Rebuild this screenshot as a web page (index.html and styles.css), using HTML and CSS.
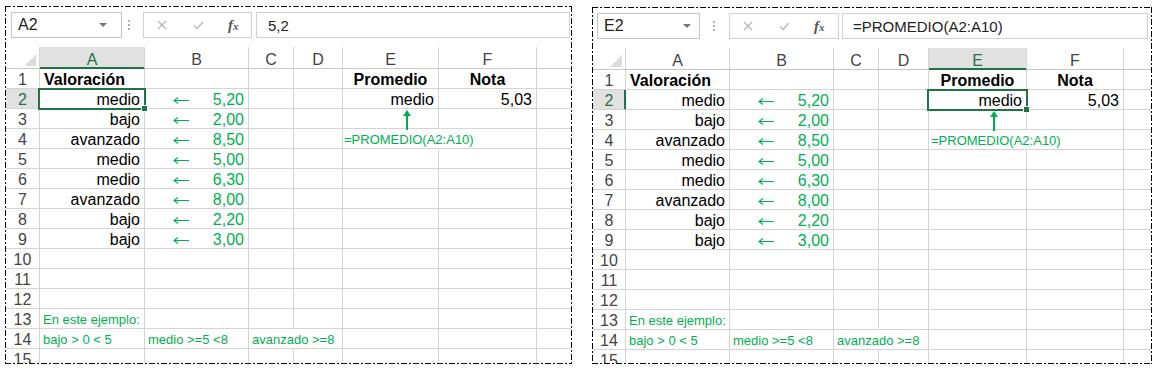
FILE: index.html
```html
<!DOCTYPE html>
<html lang="es">
<head>
    <meta charset="UTF-8">
    <title>PROMEDIO - Valoración</title>
    <link rel="stylesheet" href="styles.css">
</head>
<body>
<div class="page">

    <!-- left sheet: A2 selected -->
    <section class="panel panel-left">
        <div class="panel-body">
            <div class="formula-bar">
                <div class="name-box"><span>A2</span><span class="caret"></span></div>
                <div class="bar-dots"></div>
                <div class="fx-box">
                    <svg class="icon-cancel" width="10" height="10" viewBox="0 0 10 10"><path d="M1 1L9 9M9 1L1 9"/></svg>
                    <svg class="icon-enter" width="11" height="9" viewBox="0 0 11 9"><path d="M1 4.5L4 7.5L10 1"/></svg>
                    <span class="fx">f<span>x</span></span>
                </div>
                <div class="formula-input">5,2</div>
            </div>

            <div class="sheet sheet-left">
                <div class="ch corner"></div><div class="ch on">A</div><div class="ch">B</div><div class="ch">C</div><div class="ch">D</div><div class="ch">E</div><div class="ch">F</div><div class="ch"></div>
                <div class="rh">1</div><div class="b">Valoración</div><div></div><div></div><div></div><div class="b mid">Promedio</div><div class="b mid">Nota</div><div></div>
                <div class="rh on">2</div><div class="r sel">medio</div><div class="val"><svg class="left-arrow" width="16" height="7" viewBox="0 0 16 7"><path d="M1 3.5H16M5 0.5L1 3.5L5 6.5"/></svg>5,20</div><div></div><div></div><div class="r">medio</div><div class="r">5,03</div><div></div>
                <div class="rh">3</div><div class="r">bajo</div><div class="val"><svg class="left-arrow" width="16" height="7" viewBox="0 0 16 7"><path d="M1 3.5H16M5 0.5L1 3.5L5 6.5"/></svg>2,00</div><div></div><div></div><div><svg class="up-arrow" width="8" height="20" viewBox="0 0 8 20"><path d="M4 0L8 6H5V20H3V6H0Z"/></svg></div><div></div><div></div>
                <div class="rh">4</div><div class="r">avanzado</div><div class="val"><svg class="left-arrow" width="16" height="7" viewBox="0 0 16 7"><path d="M1 3.5H16M5 0.5L1 3.5L5 6.5"/></svg>8,50</div><div></div><div></div><div class="note formula spill">=PROMEDIO(A2:A10)</div><div></div><div></div>
                <div class="rh">5</div><div class="r">medio</div><div class="val"><svg class="left-arrow" width="16" height="7" viewBox="0 0 16 7"><path d="M1 3.5H16M5 0.5L1 3.5L5 6.5"/></svg>5,00</div><div></div><div></div><div></div><div></div><div></div>
                <div class="rh">6</div><div class="r">medio</div><div class="val"><svg class="left-arrow" width="16" height="7" viewBox="0 0 16 7"><path d="M1 3.5H16M5 0.5L1 3.5L5 6.5"/></svg>6,30</div><div></div><div></div><div></div><div></div><div></div>
                <div class="rh">7</div><div class="r">avanzado</div><div class="val"><svg class="left-arrow" width="16" height="7" viewBox="0 0 16 7"><path d="M1 3.5H16M5 0.5L1 3.5L5 6.5"/></svg>8,00</div><div></div><div></div><div></div><div></div><div></div>
                <div class="rh">8</div><div class="r">bajo</div><div class="val"><svg class="left-arrow" width="16" height="7" viewBox="0 0 16 7"><path d="M1 3.5H16M5 0.5L1 3.5L5 6.5"/></svg>2,20</div><div></div><div></div><div></div><div></div><div></div>
                <div class="rh">9</div><div class="r">bajo</div><div class="val"><svg class="left-arrow" width="16" height="7" viewBox="0 0 16 7"><path d="M1 3.5H16M5 0.5L1 3.5L5 6.5"/></svg>3,00</div><div></div><div></div><div></div><div></div><div></div>
                <div class="rh">10</div><div></div><div></div><div></div><div></div><div></div><div></div><div></div>
                <div class="rh">11</div><div></div><div></div><div></div><div></div><div></div><div></div><div></div>
                <div class="rh">12</div><div></div><div></div><div></div><div></div><div></div><div></div><div></div>
                <div class="rh">13</div><div class="note">En este ejemplo:</div><div></div><div></div><div></div><div></div><div></div><div></div>
                <div class="rh">14</div><div class="note">bajo &gt; 0 &lt; 5</div><div class="note">medio &gt;=5 &lt;8</div><div class="note spill">avanzado &gt;=8</div><div></div><div></div><div></div><div></div>
                <div class="rh">15</div><div></div><div></div><div></div><div></div><div></div><div></div><div></div>
            </div>
        </div>
    </section>

    <!-- right sheet: E2 selected -->
    <section class="panel panel-right">
        <div class="panel-body">
            <div class="formula-bar">
                <div class="name-box"><span>E2</span><span class="caret"></span></div>
                <div class="bar-dots"></div>
                <div class="fx-box">
                    <svg class="icon-cancel" width="10" height="10" viewBox="0 0 10 10"><path d="M1 1L9 9M9 1L1 9"/></svg>
                    <svg class="icon-enter" width="11" height="9" viewBox="0 0 11 9"><path d="M1 4.5L4 7.5L10 1"/></svg>
                    <span class="fx">f<span>x</span></span>
                </div>
                <div class="formula-input">=PROMEDIO(A2:A10)</div>
            </div>

            <div class="sheet sheet-right">
                <div class="ch corner"></div><div class="ch">A</div><div class="ch">B</div><div class="ch">C</div><div class="ch">D</div><div class="ch on">E</div><div class="ch">F</div><div class="ch"></div>
                <div class="rh">1</div><div class="b">Valoración</div><div></div><div></div><div></div><div class="b mid">Promedio</div><div class="b mid">Nota</div><div></div>
                <div class="rh on">2</div><div class="r">medio</div><div class="val"><svg class="left-arrow" width="16" height="7" viewBox="0 0 16 7"><path d="M1 3.5H16M5 0.5L1 3.5L5 6.5"/></svg>5,20</div><div></div><div></div><div class="r sel">medio</div><div class="r">5,03</div><div></div>
                <div class="rh">3</div><div class="r">bajo</div><div class="val"><svg class="left-arrow" width="16" height="7" viewBox="0 0 16 7"><path d="M1 3.5H16M5 0.5L1 3.5L5 6.5"/></svg>2,00</div><div></div><div></div><div><svg class="up-arrow" width="8" height="20" viewBox="0 0 8 20"><path d="M4 0L8 6H5V20H3V6H0Z"/></svg></div><div></div><div></div>
                <div class="rh">4</div><div class="r">avanzado</div><div class="val"><svg class="left-arrow" width="16" height="7" viewBox="0 0 16 7"><path d="M1 3.5H16M5 0.5L1 3.5L5 6.5"/></svg>8,50</div><div></div><div></div><div class="note formula spill">=PROMEDIO(A2:A10)</div><div></div><div></div>
                <div class="rh">5</div><div class="r">medio</div><div class="val"><svg class="left-arrow" width="16" height="7" viewBox="0 0 16 7"><path d="M1 3.5H16M5 0.5L1 3.5L5 6.5"/></svg>5,00</div><div></div><div></div><div></div><div></div><div></div>
                <div class="rh">6</div><div class="r">medio</div><div class="val"><svg class="left-arrow" width="16" height="7" viewBox="0 0 16 7"><path d="M1 3.5H16M5 0.5L1 3.5L5 6.5"/></svg>6,30</div><div></div><div></div><div></div><div></div><div></div>
                <div class="rh">7</div><div class="r">avanzado</div><div class="val"><svg class="left-arrow" width="16" height="7" viewBox="0 0 16 7"><path d="M1 3.5H16M5 0.5L1 3.5L5 6.5"/></svg>8,00</div><div></div><div></div><div></div><div></div><div></div>
                <div class="rh">8</div><div class="r">bajo</div><div class="val"><svg class="left-arrow" width="16" height="7" viewBox="0 0 16 7"><path d="M1 3.5H16M5 0.5L1 3.5L5 6.5"/></svg>2,20</div><div></div><div></div><div></div><div></div><div></div>
                <div class="rh">9</div><div class="r">bajo</div><div class="val"><svg class="left-arrow" width="16" height="7" viewBox="0 0 16 7"><path d="M1 3.5H16M5 0.5L1 3.5L5 6.5"/></svg>3,00</div><div></div><div></div><div></div><div></div><div></div>
                <div class="rh">10</div><div></div><div></div><div></div><div></div><div></div><div></div><div></div>
                <div class="rh">11</div><div></div><div></div><div></div><div></div><div></div><div></div><div></div>
                <div class="rh">12</div><div></div><div></div><div></div><div></div><div></div><div></div><div></div>
                <div class="rh">13</div><div class="note">En este ejemplo:</div><div></div><div></div><div></div><div></div><div></div><div></div>
                <div class="rh">14</div><div class="note">bajo &gt; 0 &lt; 5</div><div class="note">medio &gt;=5 &lt;8</div><div class="note spill">avanzado &gt;=8</div><div></div><div></div><div></div><div></div>
                <div class="rh">15</div><div></div><div></div><div></div><div></div><div></div><div></div><div></div>
            </div>
        </div>
    </section>

</div>
</body>
</html>
```

FILE: styles.css
```css
body {
    margin: 0;
    background: #fff;
    font-family: "Liberation Sans", Arial, sans-serif;
    color: #000;
}
.page {
    display: flex;
    align-items: flex-start;
    gap: 20px;
    padding: 6px 0 0 5px;
}

/* dash-dot frame round each sheet */
.panel {
    box-sizing: border-box;
    padding: 1px;
    background:
        repeating-linear-gradient(90deg, #000 0 6px, transparent 6px 8px, #000 8px 10px, transparent 10px 12px) left top / 100% 1px no-repeat,
        repeating-linear-gradient(90deg, #000 0 6px, transparent 6px 8px, #000 8px 10px, transparent 10px 12px) left bottom / 100% 1px no-repeat,
        repeating-linear-gradient(180deg, #000 0 6px, transparent 6px 8px, #000 8px 10px, transparent 10px 12px) left top / 1px 100% no-repeat,
        repeating-linear-gradient(180deg, #000 0 6px, transparent 6px 8px, #000 8px 10px, transparent 10px 12px) right top / 1px 100% no-repeat;
}
.panel-left {
    width: 567px;
    height: 358px;
}
.panel-right {
    width: 560px;
    height: 357px;
    margin-top: 1px;
}
.panel-body {
    height: 100%;
    background: #fff;
    display: flex;
    flex-direction: column;
    overflow: hidden;
}

/* formula bar */
.formula-bar {
    display: flex;
    height: 26px;
    margin: 5px 1px 9px 5px;
    flex: none;
}
.panel-right .formula-bar {
    margin-left: 4px;
    margin-right: 3px;
}
.name-box {
    box-sizing: border-box;
    width: 111px;
    border: 1px solid #c6c6c6;
    display: flex;
    align-items: center;
    justify-content: space-between;
    padding: 0 14px 0 6px;
    font-size: 16px;
    color: #222;
}
.panel-right .name-box {
    width: 103px;
    padding-right: 8px;
}
.caret {
    width: 0;
    height: 0;
    border-left: 4px solid transparent;
    border-right: 4px solid transparent;
    border-top: 4px solid #777;
}
.bar-dots {
    align-self: center;
    width: 2px;
    height: 10px;
    margin: 0 13px 0 6px;
    background: repeating-linear-gradient(180deg, #b0b0b0 0 2px, transparent 2px 4px);
}
.panel-right .bar-dots {
    margin: 0 14px 0 13px;
}
.fx-box {
    box-sizing: border-box;
    width: 109px;
    border: 1px solid #d0d0d0;
    display: flex;
    align-items: center;
    padding-left: 13px;
}
.panel-right .fx-box {
    width: 110px;
}
.fx-box svg path {
    fill: none;
    stroke: #b9b9b9;
    stroke-width: 1.4;
}
.icon-enter {
    margin-left: 26px;
}
.fx {
    margin-left: 24px;
    font-family: "Liberation Serif", "Times New Roman", serif;
    font-style: italic;
    font-weight: bold;
    font-size: 15px;
    color: #555;
}
.fx span {
    font-size: 11px;
}
.formula-input {
    flex: 1;
    margin-left: 4px;
    border: 1px solid #d0d0d0;
    display: flex;
    align-items: center;
    padding-left: 11px;
    font-size: 15px;
    color: #222;
}
.panel-right .formula-input {
    margin-left: 3px;
    padding-left: 10px;
}

/* grid */
.sheet {
    display: grid;
    grid-template-rows: 22px repeat(15, 20px);
    flex: 1;
    min-height: 0;
    overflow: hidden;
    font-size: 16px;
}
.sheet-left {
    grid-template-columns: 34px 105px 104px 45px 49px 96px 98px 1fr;
}
.sheet-right {
    grid-template-columns: 33px 104px 104px 45px 50px 98px 97px 1fr;
}
.sheet > div {
    box-sizing: border-box;
    position: relative;
    min-width: 0;
    display: flex;
    align-items: flex-end;
    padding: 0 4px;
    line-height: 17px;
    white-space: nowrap;
    border-right: 1px solid #d4d4d4;
    border-bottom: 1px solid #d4d4d4;
}
.sheet > div:nth-child(8n) {
    border-right: 0;
}
.ch,
.rh {
    justify-content: center;
    color: #444;
}
.ch {
    border-bottom-color: #c8c8c8 !important;
}
.corner {
    background: linear-gradient(135deg, transparent 50%, #dcdcdc 50%) right 3px bottom 2px / 12px 12px no-repeat;
}
.ch.on {
    background-color: #e1e1e1;
    color: #217346;
    border-bottom-color: #217346 !important;
    box-shadow: inset 0 -1px #217346;
}
.rh.on {
    background-color: #e1e1e1;
    color: #217346;
    border-right-color: #217346;
    box-shadow: inset -1px 0 #217346;
}

.b {
    font-weight: bold;
}
.mid {
    justify-content: center;
}
.r {
    justify-content: flex-end;
}
.val {
    justify-content: space-between;
    padding-left: 28px !important;
    color: #00b050;
}
.left-arrow {
    align-self: center;
    margin-top: 4px;
}
.left-arrow path {
    fill: none;
    stroke: #00b050;
    stroke-width: 1.1;
}
.note {
    color: #00b050;
    font-size: 13px;
    line-height: 15px;
    padding-left: 3px !important;
}
.formula {
    padding-left: 1px !important;
}
.sheet-right .formula {
    padding-left: 2px !important;
}
.spill {
    border-right-color: transparent !important;
}

/* active cell */
.sel::after {
    content: "";
    position: absolute;
    left: -2px;
    top: -1px;
    right: -2px;
    bottom: -2px;
    border: 2px solid #217346;
    z-index: 2;
}
.sel::before {
    content: "";
    position: absolute;
    right: -4px;
    bottom: -4px;
    width: 5px;
    height: 5px;
    background: #217346;
    border: 1px solid #fff;
    z-index: 3;
}

.up-arrow {
    position: absolute;
    top: 1px;
    left: 60px;
    z-index: 1;
}
.sheet-right .up-arrow {
    left: 61px;
}
.up-arrow path {
    fill: #00b050;
}
```
